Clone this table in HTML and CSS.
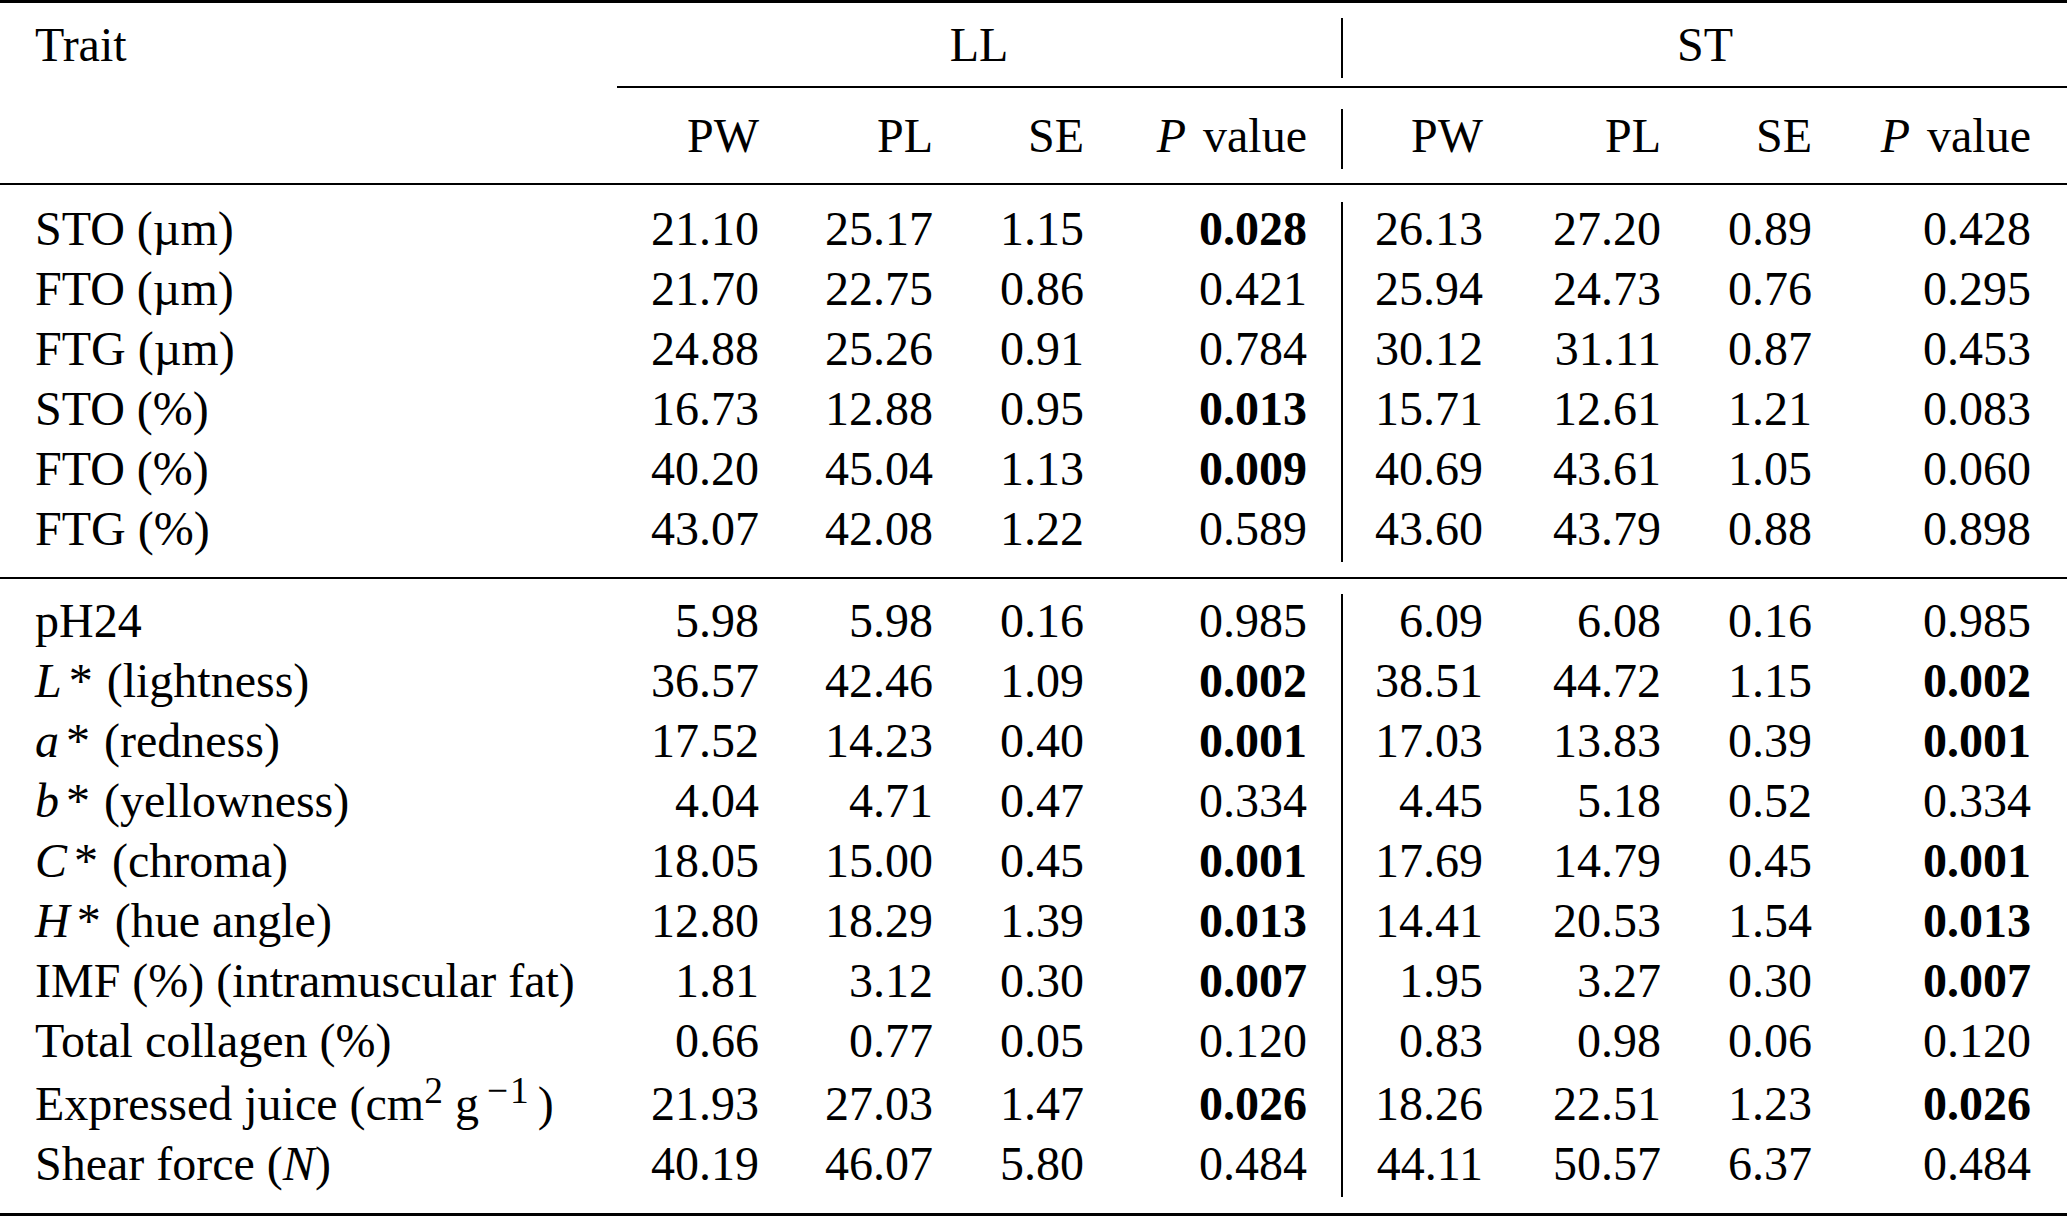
FILE: index.html
```html
<!DOCTYPE html>
<html lang="en">
<head>
<meta charset="utf-8">
<title>Trait table</title>
<link rel="stylesheet" href="styles.css">
</head>
<body>
<table class="tbl">
  <colgroup>
    <col class="c-trait">
    <col class="c-pw">
    <col class="c-pl">
    <col class="c-se">
    <col class="c-p">
    <col class="c-pw2">
    <col class="c-pl2">
    <col class="c-se2">
    <col class="c-p2">
  </colgroup>
  <tbody>
    <tr class="sp"><td colspan="9"><div class="rule heavy top"></div></td></tr>
    <tr class="hd">
      <td class="lab">Trait</td>
      <td colspan="4" class="grp bar">LL</td>
      <td colspan="4" class="grp">ST</td>
    </tr>
    <tr class="sp"><td></td><td colspan="8"><div class="rule cmid"></div></td></tr>
    <tr class="hd">
      <td class="lab"></td>
      <td>PW</td><td>PL</td><td>SE</td><td class="bar"><i class="pv">P</i>value</td>
      <td>PW</td><td>PL</td><td>SE</td><td class="last"><i class="pv">P</i>value</td>
    </tr>
    <tr class="sp"><td colspan="9"><div class="rule mid head"></div></td></tr>

    <tr><td class="lab">STO (µm)</td><td>21.10</td><td>25.17</td><td>1.15</td><td class="bar"><b>0.028</b></td><td>26.13</td><td>27.20</td><td>0.89</td><td class="last">0.428</td></tr>
    <tr><td class="lab">FTO (µm)</td><td>21.70</td><td>22.75</td><td>0.86</td><td class="bar">0.421</td><td>25.94</td><td>24.73</td><td>0.76</td><td class="last">0.295</td></tr>
    <tr><td class="lab">FTG (µm)</td><td>24.88</td><td>25.26</td><td>0.91</td><td class="bar">0.784</td><td>30.12</td><td>31.11</td><td>0.87</td><td class="last">0.453</td></tr>
    <tr><td class="lab">STO (%)</td><td>16.73</td><td>12.88</td><td>0.95</td><td class="bar"><b>0.013</b></td><td>15.71</td><td>12.61</td><td>1.21</td><td class="last">0.083</td></tr>
    <tr><td class="lab">FTO (%)</td><td>40.20</td><td>45.04</td><td>1.13</td><td class="bar"><b>0.009</b></td><td>40.69</td><td>43.61</td><td>1.05</td><td class="last">0.060</td></tr>
    <tr><td class="lab">FTG (%)</td><td>43.07</td><td>42.08</td><td>1.22</td><td class="bar">0.589</td><td>43.60</td><td>43.79</td><td>0.88</td><td class="last">0.898</td></tr>

    <tr class="sp"><td colspan="9"><div class="rule mid sep"></div></td></tr>

    <tr><td class="lab">pH24</td><td>5.98</td><td>5.98</td><td>0.16</td><td class="bar">0.985</td><td>6.09</td><td>6.08</td><td>0.16</td><td class="last">0.985</td></tr>
    <tr><td class="lab"><i>L</i><span class="ast">*</span> (lightness)</td><td>36.57</td><td>42.46</td><td>1.09</td><td class="bar"><b>0.002</b></td><td>38.51</td><td>44.72</td><td>1.15</td><td class="last"><b>0.002</b></td></tr>
    <tr><td class="lab"><i>a</i><span class="ast">*</span> (redness)</td><td>17.52</td><td>14.23</td><td>0.40</td><td class="bar"><b>0.001</b></td><td>17.03</td><td>13.83</td><td>0.39</td><td class="last"><b>0.001</b></td></tr>
    <tr><td class="lab"><i>b</i><span class="ast">*</span> (yellowness)</td><td>4.04</td><td>4.71</td><td>0.47</td><td class="bar">0.334</td><td>4.45</td><td>5.18</td><td>0.52</td><td class="last">0.334</td></tr>
    <tr><td class="lab"><i>C</i><span class="ast">*</span> (chroma)</td><td>18.05</td><td>15.00</td><td>0.45</td><td class="bar"><b>0.001</b></td><td>17.69</td><td>14.79</td><td>0.45</td><td class="last"><b>0.001</b></td></tr>
    <tr><td class="lab"><i>H</i><span class="ast">*</span> (hue angle)</td><td>12.80</td><td>18.29</td><td>1.39</td><td class="bar"><b>0.013</b></td><td>14.41</td><td>20.53</td><td>1.54</td><td class="last"><b>0.013</b></td></tr>
    <tr><td class="lab">IMF (%) (intramuscular fat)</td><td>1.81</td><td>3.12</td><td>0.30</td><td class="bar"><b>0.007</b></td><td>1.95</td><td>3.27</td><td>0.30</td><td class="last"><b>0.007</b></td></tr>
    <tr><td class="lab">Total collagen (%)</td><td>0.66</td><td>0.77</td><td>0.05</td><td class="bar">0.120</td><td>0.83</td><td>0.98</td><td>0.06</td><td class="last">0.120</td></tr>
    <tr class="tall"><td class="lab">Expressed juice (cm<sup>2</sup> g<sup class="neg">−1</sup>)</td><td>21.93</td><td>27.03</td><td>1.47</td><td class="bar"><b>0.026</b></td><td>18.26</td><td>22.51</td><td>1.23</td><td class="last"><b>0.026</b></td></tr>
    <tr><td class="lab">Shear force (<i>N</i>)</td><td>40.19</td><td>46.07</td><td>5.80</td><td class="bar">0.484</td><td>44.11</td><td>50.57</td><td>6.37</td><td class="last">0.484</td></tr>

    <tr class="sp"><td colspan="9"><div class="rule heavy bottom"></div></td></tr>
  </tbody>
</table>
</body>
</html>
```

FILE: styles.css
```css
html, body {
  margin: 0;
  padding: 0;
  background: #fff;
}

.tbl {
  width: 2067px;
  table-layout: fixed;
  border-collapse: separate;
  border-spacing: 0;
  font-family: "Liberation Serif", "Times New Roman", serif;
  font-size: 48px;
  color: #000;
}

.c-trait { width: 617px; }
.c-pw { width: 142px; }
.c-pl { width: 174px; }
.c-se { width: 151px; }
.c-p { width: 259px; }
.c-pw2 { width: 140px; }
.c-pl2 { width: 178px; }
.c-se2 { width: 151px; }
.c-p2 { width: 255px; }

.tbl td {
  padding: 0 0 6px 0;
  line-height: 54px;
  text-align: right;
  vertical-align: top;
  white-space: nowrap;
}

.tbl td.lab {
  text-align: left;
  padding-left: 35px;
}

.tbl td.bar {
  border-right: 2px solid #000;
  padding-right: 34px;
}

.tbl td.last {
  padding-right: 36px;
}

.tbl td.grp {
  text-align: center;
  padding-right: 0;
}

.tbl tr.tall td {
  padding-top: 3px;
}

.tbl tr.sp td {
  padding: 0;
  line-height: 0;
  font-size: 0;
  border: 0;
}

.rule {
  background: #000;
  height: 2px;
}

.rule.heavy {
  height: 3px;
}

.rule.top {
  margin: 0 0 15px 0;
}

.rule.cmid {
  margin: 8px 0 21px 0;
}

.rule.head {
  margin: 14px 0 17px 0;
}

.rule.sep {
  margin: 15px 0 15px 0;
}

.rule.bottom {
  margin: 16px 0 0 0;
}

.pv {
  margin-right: 17px;
}

.ast {
  margin-left: 7px;
  margin-right: 2px;
}

.tbl b {
  font-weight: bold;
}

.tbl sup {
  font-size: 0.78em;
  line-height: 0;
  vertical-align: 0.45em;
}

.tbl sup.neg {
  margin-left: 8px;
  margin-right: 7px;
  letter-spacing: 2px;
}
```
